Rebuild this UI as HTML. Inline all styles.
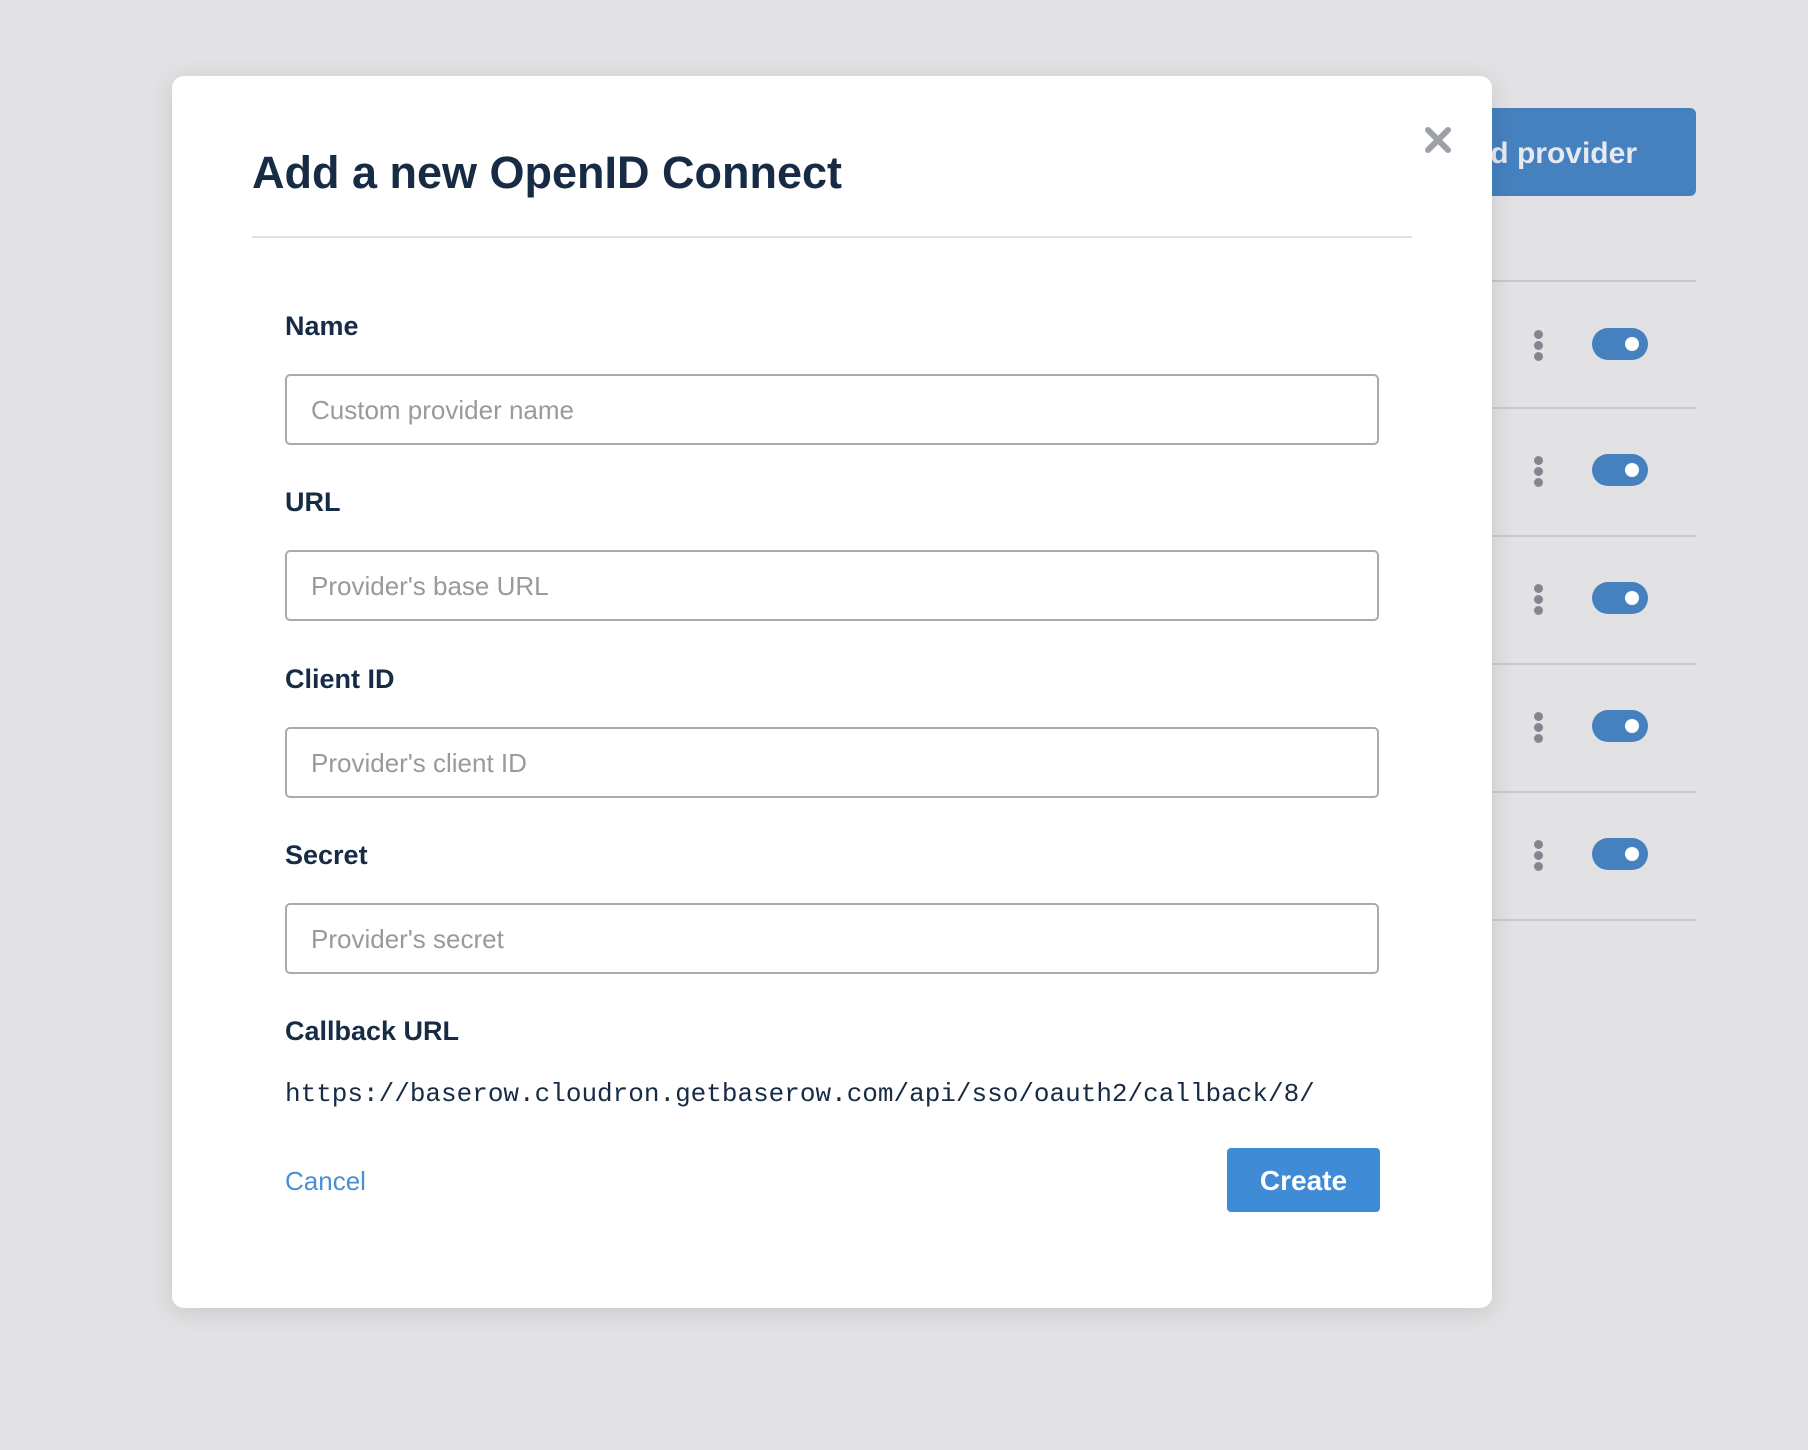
<!DOCTYPE html>
<html><head><meta charset="utf-8"><style>
*{margin:0;padding:0;box-sizing:border-box}
body{width:1808px;height:1450px;background:#e2e2e4;position:relative;overflow:hidden;font-family:"Liberation Sans",sans-serif}
.bbtn{position:absolute;left:1300px;top:108px;width:396px;height:88px;background:#4581bf;border-radius:6px;color:#e6e9ef;font-weight:bold;font-size:30px;text-align:right;padding-right:59px;line-height:92px}
.line{position:absolute;left:1300px;width:396px;height:2px;background:#c9c9cd}
.dots{position:absolute;left:1534px;width:10px}
.dots i{display:block;width:9px;height:9px;border-radius:50%;background:#81868f;margin-bottom:2px}
.tog{position:absolute;left:1592px;width:56px;height:32px;border-radius:16px;background:#4581bf}
.tog:after{content:"";position:absolute;right:9px;top:9px;width:14px;height:14px;border-radius:50%;background:#fff}
.modal{position:absolute;left:172px;top:76px;width:1320px;height:1232px;background:#fff;border-radius:12px;box-shadow:0 4px 24px rgba(0,0,0,.12)}
h1{position:absolute;left:80px;top:71px;font-size:45px;color:#172b45;font-weight:bold;white-space:nowrap}
.hr{position:absolute;left:80px;top:160px;width:1160px;height:2px;background:#e0e0e2}
.lab{position:absolute;left:113px;font-size:27px;font-weight:bold;color:#172b45}
.inp{position:absolute;left:113px;width:1094px;height:71px;border:2px solid #a8abb0;border-radius:5px;font-size:26px;color:#9a9a9a;padding-left:24px;line-height:69px}
.url{position:absolute;left:113px;top:1003px;font-family:"Liberation Mono",monospace;font-size:26px;color:#172b45;white-space:nowrap}
.cancel{position:absolute;left:113px;top:1090px;font-size:26px;color:#4a8fd4}
.create{position:absolute;left:1055px;top:1072px;width:153px;height:64px;background:#3f8bd6;border-radius:4px;color:#fff;font-weight:bold;font-size:28px;text-align:center;line-height:66px}
.x{position:absolute;left:1252px;top:50px}
</style></head><body>
<div class="bbtn">Add provider</div>
<div class="line" style="top:280px"></div>
<div class="line" style="top:407px"></div>
<div class="line" style="top:535px"></div>
<div class="line" style="top:663px"></div>
<div class="line" style="top:791px"></div>
<div class="line" style="top:919px"></div>
<div class="dots" style="top:330px"><i></i><i></i><i></i></div>
<div class="dots" style="top:456px"><i></i><i></i><i></i></div>
<div class="dots" style="top:584px"><i></i><i></i><i></i></div>
<div class="dots" style="top:712px"><i></i><i></i><i></i></div>
<div class="dots" style="top:840px"><i></i><i></i><i></i></div>
<div class="tog" style="top:328px"></div>
<div class="tog" style="top:454px"></div>
<div class="tog" style="top:582px"></div>
<div class="tog" style="top:710px"></div>
<div class="tog" style="top:838px"></div>
<div class="modal">
<h1>Add a new OpenID Connect</h1>
<svg class="x" width="28" height="28" viewBox="0 0 28 28"><path d="M4 4L24 24M24 4L4 24" stroke="#9da1a7" stroke-width="6" stroke-linecap="round"/></svg>
<div class="hr"></div>
<div class="lab" style="top:235px">Name</div>
<div class="inp" style="top:298px">Custom provider name</div>
<div class="lab" style="top:411px">URL</div>
<div class="inp" style="top:474px">Provider's base URL</div>
<div class="lab" style="top:588px">Client ID</div>
<div class="inp" style="top:651px">Provider's client ID</div>
<div class="lab" style="top:764px">Secret</div>
<div class="inp" style="top:827px">Provider's secret</div>
<div class="lab" style="top:940px">Callback URL</div>
<div class="url">https://baserow.cloudron.getbaserow.com/api/sso/oauth2/callback/8/</div>
<div class="cancel">Cancel</div>
<div class="create">Create</div>
</div>
</body></html>
